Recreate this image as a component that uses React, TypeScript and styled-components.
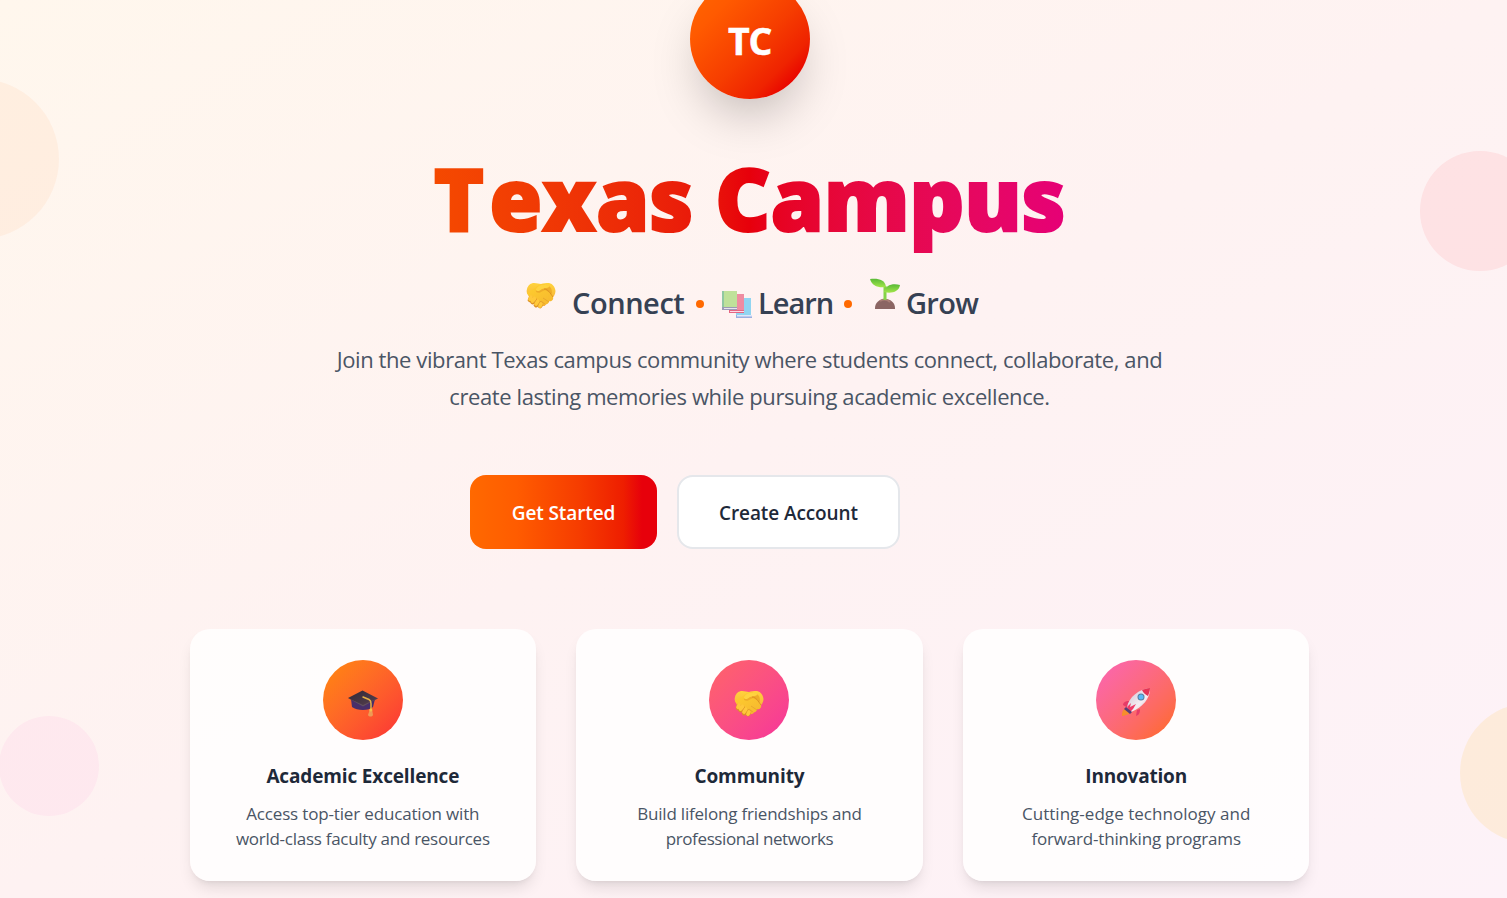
import React from 'react';
import styled, { createGlobalStyle } from 'styled-components';

const GlobalStyle = createGlobalStyle`
  *, *::before, *::after { box-sizing: border-box; }
  body { margin: 0; overflow: hidden; font-family: "Segoe UI", "Open Sans", "Noto Sans", sans-serif; }
  h1, h2, h3, p { margin: 0; }
`;

const Page = styled.div`
  position: relative;
  height: 898px;
  overflow: hidden;
  background: linear-gradient(to bottom right in oklab, #fff7ed, #fef2f2 50%, #fdf2f8);
`;

const Bubble = styled.div<{ $x: number; $y: number; $size: number; $color: string }>`
  position: absolute;
  left: ${p => p.$x}px;
  top: ${p => p.$y}px;
  width: ${p => p.$size}px;
  height: ${p => p.$size}px;
  border-radius: 50%;
  background: ${p => p.$color};
`;

const Content = styled.main`
  position: relative;
  width: 1120px;
  margin-left: 189.5px;
  display: flex;
  flex-direction: column;
  align-items: center;
`;

const Logo = styled.div`
  width: 120px;
  height: 120px;
  margin-top: -21px;
  flex: none;
  border-radius: 50%;
  display: flex;
  align-items: center;
  justify-content: center;
  padding-top: 2px;
  color: #fff;
  font-size: 37.5px;
  font-weight: 700;
  letter-spacing: -1.3px;
  -webkit-text-stroke: 0.5px #fff;
  background: linear-gradient(to bottom right, #ff6900, #ff5a00 25%, #f63d00 55%, #ef2300 75%, #e90500 86%, #e7000b);
  box-shadow: 0 25px 50px -12px rgba(0, 0, 0, 0.25);
`;

const Title = styled.h1`
  height: 110px;
  margin-top: 44px;
  line-height: 110px;
  white-space: nowrap;
  font-size: 86px;
  font-weight: 800;
  letter-spacing: 0.2px;
  color: transparent;
  -webkit-text-stroke: 2px transparent;
  background: linear-gradient(to right in oklab, #f54900, #e7000b, #e60076);
  background-clip: text;
  -webkit-background-clip: text;
`;

const Initial = styled.span`
  letter-spacing: 5px;
`;

const Rest = styled.span`
  letter-spacing: -0.4px;
`;

const Tagline = styled.div`
  display: flex;
  align-items: center;
  width: 456px;
  height: 48px;
  margin-top: 26px;
  margin-left: 9px;
  color: #364153;
  font-size: 29px;
  font-weight: 600;
  line-height: 48px;
  white-space: nowrap;
`;

const Word = styled.span<{ $width: number; $spacing: number }>`
  width: ${p => p.$width}px;
  letter-spacing: ${p => p.$spacing}px;
`;

const Dot = styled.span`
  width: 8px;
  height: 8px;
  margin: 2px 18px 0 12px;
  border-radius: 50%;
  background: #ff6900;
`;

const Glyph = styled.span<{ $lift?: number; $gap: number }>`
  display: flex;
  margin-right: ${p => p.$gap}px;
  margin-bottom: ${p => p.$lift ?? 0}px;
`;

const Intro = styled.p`
  margin-top: 14px;
  color: #4a5565;
  font-size: 22px;
  line-height: 37px;
  text-align: center;
  white-space: nowrap;
`;

const Line = styled.span<{ $spacing: number }>`
  display: block;
  letter-spacing: ${p => p.$spacing}px;
`;

const Actions = styled.div`
  display: flex;
  gap: 20px;
  align-self: flex-start;
  margin: 60px 0 0 280.5px;
`;

const Button = styled.button<{ $primary?: boolean }>`
  width: ${p => (p.$primary ? 187 : 223)}px;
  height: 74px;
  padding: 2px 0 0;
  border-radius: 16px;
  border: ${p => (p.$primary ? '0' : '2px solid #e5e7eb')};
  background: ${p => (p.$primary ? 'linear-gradient(to right, #ff6900, #ff5c00 25%, #f63d00 58%, #ee1e00 82%, #e7000b 92%)' : '#fff')};
  color: ${p => (p.$primary ? '#fff' : '#1e2939')};
  font-family: inherit;
  font-size: 19px;
  font-weight: 600;
  letter-spacing: -0.1px;
  white-space: nowrap;
`;

const Cards = styled.section`
  display: grid;
  grid-template-columns: repeat(3, 1fr);
  gap: 40px;
  width: 100%;
  margin-top: 80px;
`;

const Card = styled.article`
  height: 252px;
  padding-top: 31px;
  border-radius: 20px;
  display: flex;
  flex-direction: column;
  align-items: center;
  text-align: center;
  background: rgba(255, 255, 255, 0.8);
  box-shadow: 0 10px 15px -3px rgba(0, 0, 0, 0.1), 0 4px 6px -4px rgba(0, 0, 0, 0.1);
`;

const Badge = styled.div<{ $from: string; $to: string; $drop: number }>`
  width: 80px;
  height: 80px;
  flex: none;
  padding-top: ${p => p.$drop}px;
  display: flex;
  align-items: center;
  justify-content: center;
  border-radius: 50%;
  background: linear-gradient(to bottom right in oklab, ${p => p.$from}, ${p => p.$to});
`;

const CardTitle = styled.h3<{ $spacing: number }>`
  margin-top: 21px;
  color: #1e2939;
  font-size: 19px;
  font-weight: 700;
  line-height: 30px;
  letter-spacing: ${p => p.$spacing}px;
  white-space: nowrap;
`;

const CardText = styled.p`
  margin-top: 10px;
  color: #4a5565;
  font-size: 17px;
  line-height: 25px;
  white-space: nowrap;
`;

function Handshake() {
  return (
    <svg width="30" height="30" viewBox="0 0 30 30">
      <defs>
        <linearGradient id="hand" x1="0" y1="0" x2="0" y2="1">
          <stop offset="0" stopColor="#ffd33c" />
          <stop offset="1" stopColor="#f4a93a" />
        </linearGradient>
        <linearGradient id="palm" x1="0" y1="0" x2="1" y2="1">
          <stop offset="0" stopColor="#ffcf2e" />
          <stop offset="1" stopColor="#f5b62f" />
        </linearGradient>
      </defs>
      <path d="M1 8C2 4 5 2 8 2c3 0 5 1 7 1 2-1 5-1 8-1 4 1 6 4 6.500 8 0 3-2 6-4 8l-7 7-9-1-6-9C1 13 0 11 1 8Z" fill="url(#hand)" />
      <path d="M9 7c2-2 5-4 9-4l6 5 3 8c1 3-2 5-4 4 0 2-2 4-4 3-1 2-3 3-5 2L3 16 1 12c2-2 5-3 8-5Z" fill="url(#palm)" />
      <path d="M10 9c2-4 5-5 9-5l3 1c4 1 4 5 4 8-3-1-4-3-7-4l-4 2c-3 2-6 0-5-2Z" fill="#efad28" />
      <path d="M10 8c2-4 6-5 10-4 4 0 4 3 0 3l-4 1c-2 2-5 3-6 1Z" fill="#ffd340" />
      <path d="M18 8c4 0 6 4 9 8" fill="none" stroke="#d98c20" strokeWidth=".9" />
      <g stroke="#dc9226" strokeWidth="4.700" strokeLinecap="round">
        <path d="m5 17-1 2M8.500 18.500 6.500 21M12 21l-2 3M15 23l-1 2" />
      </g>
      <g stroke="#ffc83a" strokeWidth="3.700" strokeLinecap="round">
        <path d="m5 16-1 2M8.500 17.500 6.500 20M12 20l-2 3M15 23l-1 2" />
      </g>
      <path d="m17 17 6 4m-8-1 4 3" stroke="#e5a12d" strokeWidth=".8" />
    </svg>
  );
}

function Books() {
  return (
    <svg width="30" height="28" viewBox="0 0 30 28">
      <path d="M14 8h15v20H14z" fill="#91d5f1" />
      <path d="M14 25h16v3H14z" fill="#9aafe0" />
      <path d="M15 25h15v1.500H15z" fill="#dfe6fa" />
      <path d="M7 4h15v19H7z" fill="#ef8ca1" />
      <path d="M7 20h15v3H7z" fill="#e46683" />
      <path d="M8 21h14v1H8z" fill="#fbdce8" />
      <path d="M0 1h15v19H0z" fill="#bfe19a" />
      <path d="M0 1h2v19H0z" fill="#91c8a3" />
      <path d="M0 17h15v3H0z" fill="#9b9bb6" />
      <path d="M2 18h13v1H2z" fill="#e9e3ef" />
    </svg>
  );
}

function Seedling() {
  return (
    <svg width="30" height="31" viewBox="0 0 30 31">
      <defs>
        <linearGradient id="leaf" x1="0" y1="0" x2="0" y2="1">
          <stop stopColor="#58b936" />
          <stop offset="1" stopColor="#a4e64b" />
        </linearGradient>
      </defs>
      <path d="M5 31v-1c0-5 4-9 10-9s10 4 10 9v1Z" fill="#8b6563" />
      <path d="M10 23c3-2 7-2 10 1" stroke="#a97d75" strokeWidth="2" fill="none" />
      <path d="M13.500 22V8h3v14Z" fill="#85d347" />
      <path d="M0 1c7-1 15 0 16 8-8 1-14-1-16-8Z" fill="url(#leaf)" />
      <path d="M14 14c1-7 9-9 16-7-1 7-9 9-16 7Z" fill="url(#leaf)" />
    </svg>
  );
}

function GradCap() {
  return (
    <svg width="30" height="27" viewBox="0 0 30 27">
      <defs>
        <linearGradient id="board" x1="0" y1="0" x2="1" y2="1">
          <stop stopColor="#302937" />
          <stop offset="1" stopColor="#59404f" />
        </linearGradient>
      </defs>
      <path d="M3 9h24l-2 8c-4 4-16 4-21 0Z" fill="#482e69" />
      <path d="M0 8 14.500.5 30 8.500 15 16Z" fill="url(#board)" />
      <path d="m0 8 15 7 15-7-15 8.500Z" fill="#625060" />
      <path d="m15 7 6 2.500c2 1 2 2 2 4V21" fill="none" stroke="#e5b246" strokeWidth="1.500" strokeLinecap="round" />
      <path d="M22 19h2l1 6c-1 2-4 2-5 0Z" fill="#ee9b55" />
      <circle cx="22.800" cy="20" r="1.500" fill="#f5be4c" />
    </svg>
  );
}

function Rocket() {
  return (
    <svg width="30" height="30" viewBox="0 0 30 30">
      <defs>
        <linearGradient id="hull" x1="0" y1="0" x2="1" y2="1">
          <stop stopColor="#c9bfd0" />
          <stop offset=".6" stopColor="#f7edf3" />
          <stop offset="1" stopColor="#c6acc0" />
        </linearGradient>
      </defs>
      <path d="M5 21c-4 2-4 5-4 8 4-1 7-1 8-4Z" fill="#f68e2c" />
      <path d="M8 14c-4 0-6 2-6 4l5 3M16 23l-1 6c3-1 4-3 4-7" fill="#e73b67" />
      <path d="M6 20C8 10 18 2 29 1c0 11-7 19-19 24Z" fill="url(#hull)" />
      <path d="M21 3c3-1 5-2 8-2 0 3-1 5-2 8-2-1-5-3-6-6Z" fill="#e53355" />
      <path d="m6 20 4-4-1 4 6-3c-2 3-3 6-6 8Z" fill="#ef3c69" />
      <path d="m5 20 6 5-2 2-6-5Z" fill="#593c77" />
      <circle cx="20" cy="10" r="3.500" fill="#557d9e" />
      <circle cx="20" cy="10" r="2.500" fill="#59b9f5" />
    </svg>
  );
}

const cards = [
  { title: 'Academic Excellence', lines: ['Access top-tier education with', 'world-class faculty and resources'], from: '#ff8904', to: '#fb2c36', icon: <GradCap />, drop: 6, ts: -0.15, ls: [-0.16, -0.27] },
  { title: 'Community', lines: ['Build lifelong friendships and', 'professional networks'], from: '#ff6467', to: '#f6339a', icon: <Handshake />, drop: 8, ts: -0.1, ls: [-0.2, -0.38] },
  { title: 'Innovation', lines: ['Cutting-edge technology and', 'forward-thinking programs'], from: '#fb64b6', to: '#ff6900', icon: <Rocket />, drop: 4, ts: -0.2, ls: [0.03, -0.18] },
];

export default function App() {
  return (
    <Page>
      <GlobalStyle />
      <Bubble $x={-101} $y={79} $size={160} $color="rgba(255,105,0,0.055)" />
      <Bubble $x={1420} $y={151} $size={120} $color="rgba(251,44,54,0.08)" />
      <Bubble $x={-1} $y={716} $size={100} $color="rgba(246,51,200,0.05)" />
      <Bubble $x={1460} $y={703} $size={140} $color="rgba(255,185,0,0.11)" />
      <Content>
        <Logo>TC</Logo>
        <Title><Initial>T</Initial><Rest>exas Campus</Rest></Title>
        <Tagline>
          <Glyph $gap={16} $lift={14}><Handshake /></Glyph>
          <Word $width={112} $spacing={-0.45}>Connect</Word>
          <Dot />
          <Glyph $gap={6} $lift={-2}><Books /></Glyph>
          <Word $width={74} $spacing={-1}>Learn</Word>
          <Dot />
          <Glyph $gap={6} $lift={20}><Seedling /></Glyph>
          <Word $width={72} $spacing={-0.7}>Grow</Word>
        </Tagline>
        <Intro>
          <Line $spacing={-0.4}>Join the vibrant Texas campus community where students connect, collaborate, and</Line>
          <Line $spacing={-0.4}>create lasting memories while pursuing academic excellence.</Line>
        </Intro>
        <Actions>
          <Button $primary>Get Started</Button>
          <Button>Create Account</Button>
        </Actions>
        <Cards>
          {cards.map(c => (
            <Card key={c.title}>
              <Badge $from={c.from} $to={c.to} $drop={c.drop}>{c.icon}</Badge>
              <CardTitle $spacing={c.ts}>{c.title}</CardTitle>
              <CardText>
                {c.lines.map((l, i) => <Line key={l} $spacing={c.ls[i]}>{l}</Line>)}
              </CardText>
            </Card>
          ))}
        </Cards>
      </Content>
    </Page>
  );
}
